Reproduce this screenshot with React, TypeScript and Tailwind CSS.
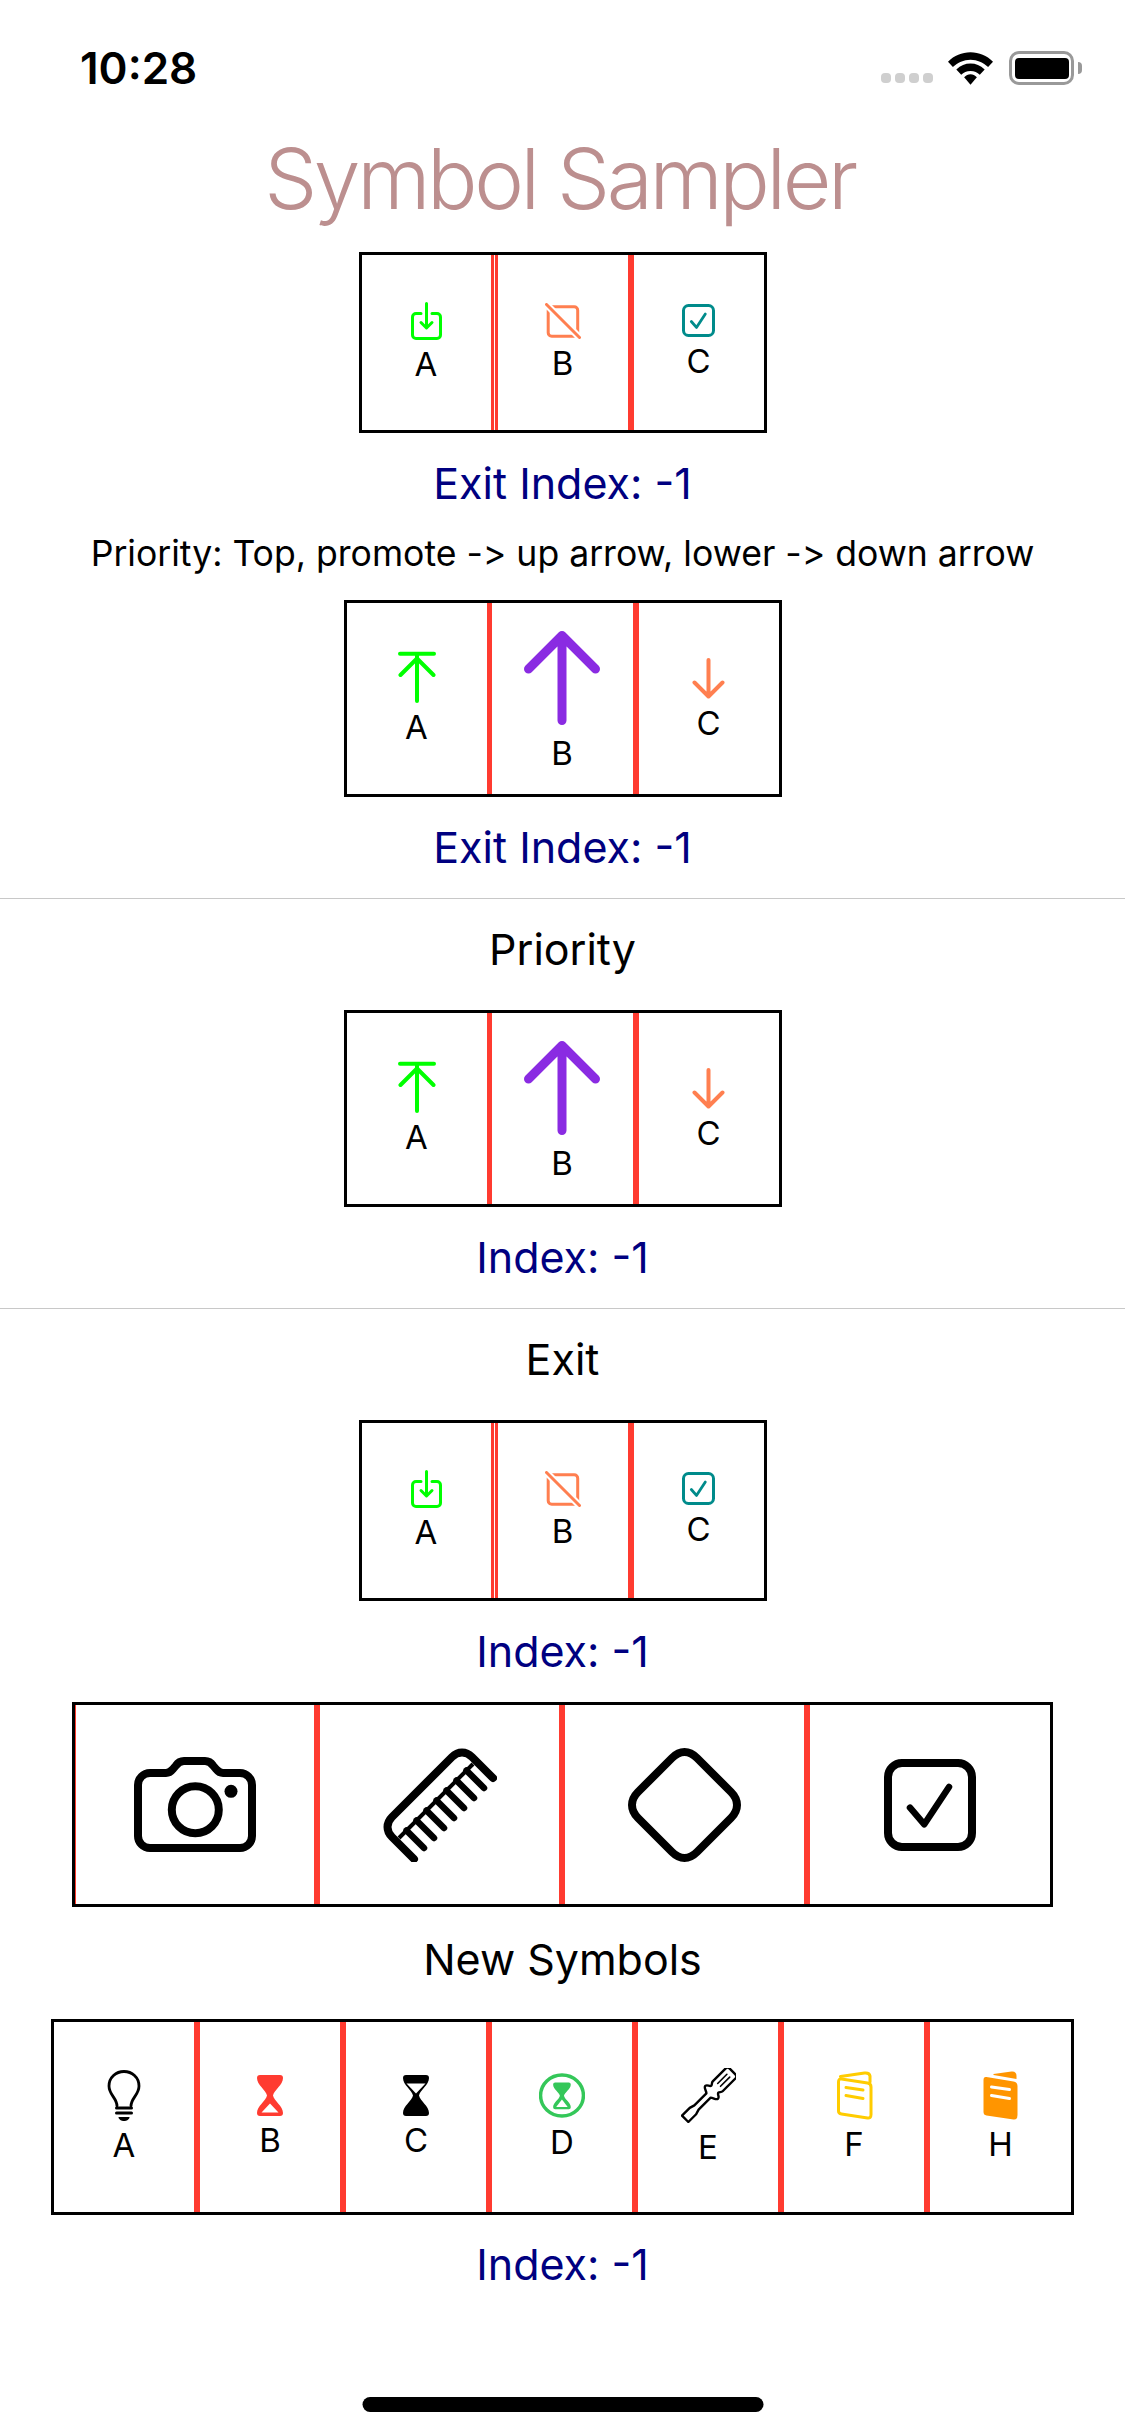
import type { ReactNode } from "react"

function ExitDown() {
  return (
    <svg width="31" height="38" viewBox="0 0 31 38" fill="none" stroke="#00ff00" strokeWidth="3" strokeLinecap="round" strokeLinejoin="round">
      <path d="M10 11.500H5a3.500 3.500 0 0 0-3.500 3.500v18A3.500 3.500 0 0 0 5 36.500h21a3.500 3.500 0 0 0 3.500-3.500V15a3.500 3.500 0 0 0-3.500-3.500h-5" />
      <path d="M15.500 1.500v24M10 20.500l5.500 5.500 5.500-5.500" />
    </svg>
  )
}

function SlashSquare() {
  return (
    <svg width="36" height="36" viewBox="0 0 36 36" fill="none" strokeLinecap="round">
      <rect x="3.200" y="3.800" width="29.500" height="29.500" rx="3.500" stroke="#ff7f50" strokeWidth="3" />
      <path d="M1 1l34 34" stroke="#fff" strokeWidth="7" />
      <path d="M1.500 1.500l33 33" stroke="#ff7f50" strokeWidth="3" />
    </svg>
  )
}

function CheckSquare({ size, color, box, tick }: { size: number; color: string; box: number; tick: number }) {
  const s = (box / 2) * (92 / size)
  return (
    <svg width={size} height={size} viewBox="0 0 92 92" fill="none" stroke={color} strokeLinecap="round" strokeLinejoin="round">
      <rect x={s} y={s} width={92 - 2 * s} height={92 - 2 * s} rx="14" strokeWidth={box * (92 / size)} />
      <path d="M26 48.700L40.300 65.300L65 28" strokeWidth={tick * (92 / size)} />
    </svg>
  )
}

function ArrowTop() {
  return (
    <svg width="38" height="52" viewBox="0 0 38 52" fill="none" stroke="#00ff00" strokeWidth="4" strokeLinecap="round" strokeLinejoin="round">
      <path d="M2 2.700H36M19 4v46M2.500 24L19 7.500L35.500 24" />
    </svg>
  )
}

function ArrowUpBig() {
  return (
    <svg width="76" height="94" viewBox="0 0 76 94" fill="none" stroke="#8a2be2" strokeWidth="9" strokeLinecap="round" strokeLinejoin="round">
      <path d="M38 5v84.500M4.500 38L38 4.500L71.500 38" />
    </svg>
  )
}

function ArrowDownSmall() {
  return (
    <svg width="33" height="41" viewBox="0 0 33 41" fill="none" stroke="#ff7f50" strokeWidth="4" strokeLinecap="round" strokeLinejoin="round">
      <path d="M16.500 2v36M2.500 24.500L16.500 38.500L30.500 24.500" />
    </svg>
  )
}

function Camera() {
  return (
    <svg width="122" height="95" viewBox="0 0 122 95" fill="none" stroke="#000" strokeWidth="8" strokeLinejoin="round">
      <path d="M4 28a12 12 0 0 1 12-12H32c4 0 5-1.500 7-4l3-3.500c2-3 4-4.500 8-4.500H71c4 0 6 1.500 8 4.500l3 3.500c2 2.500 3 4 7 4H106a12 12 0 0 1 12 12V79a12 12 0 0 1-12 12H16a12 12 0 0 1-12-12Z" />
      <circle cx="61.300" cy="52.700" r="23.500" />
      <circle cx="97" cy="34.300" r="6.500" fill="#000" stroke="none" />
    </svg>
  )
}

function Comb() {
  const tips = [
    [101, 41], [91, 51], [81, 61], [71, 71], [61, 81], [51, 91], [41, 101],
  ]
  return (
    <svg width="114" height="115" viewBox="0 0 114 115" fill="none" stroke="#000" strokeLinecap="round" strokeLinejoin="round">
      <path d="M110 31L89 10C83 4 75 4 69 10L9 70C3 76 3 84 9 90L31 112" strokeWidth="8" />
      <path d="M90 17L16 91" strokeWidth="4" strokeLinecap="butt" />
      {tips.map(([x, y]) => (
        <path key={x} d={`M${x} ${y}L${x - 17.5} ${y - 17.5}`} strokeWidth="6.500" />
      ))}
    </svg>
  )
}

function Diamond() {
  return (
    <svg width="113" height="114" viewBox="0 0 113 114" fill="none" stroke="#000" strokeWidth="8" strokeLinejoin="round">
      <path d="M44 10C48 6 52 4 56.500 4C61 4 65 6 69 10L103 44C107 48 109 52.500 109 57C109 61.500 107 66 103 70L69 104C65 108 61 110 56.500 110C52 110 48 108 44 104L10 70C6 66 4 61.500 4 57C4 52.500 6 48 10 44Z" />
    </svg>
  )
}

function Bulb() {
  return (
    <svg width="34" height="51" viewBox="0 0 33 51" fill="none" stroke="#000" strokeLinecap="round">
      <path d="M9.500 36C9.500 28 1.500 25 1.500 16C1.500 7.500 8.500 1.500 16.500 1.500C24.500 1.500 31.500 7.500 31.500 16C31.500 25 23.500 28 23.500 36" strokeWidth="2.800" />
      <path d="M9 38H24M9 43H24" strokeWidth="3" />
      <path d="M11 47H22C22 49.500 19 51 16.500 51C14 51 11 49.500 11 47Z" fill="#000" stroke="none" />
    </svg>
  )
}

const hourglass =
  "M3 0H23Q26 0 26 3C26 10 17 15 16 20.500C17 26 26 31 26 38Q26 41 23 41H3Q0 41 0 38C0 31 9 26 10 20.500C9 15 0 10 0 3Q0 0 3 0Z"

function HourglassBottom({ color }: { color: string }) {
  return (
    <svg width="26" height="41" viewBox="0 0 26 41">
      <path d={hourglass} fill={color} />
      <path d="M13 28.500L21.500 37.500H4.500Z" fill="#fff" />
    </svg>
  )
}

function HourglassTop() {
  return (
    <svg width="26" height="41" viewBox="0 0 26 41">
      <path d={hourglass} fill="#000" />
      <path d="M3.500 8.500H22.500L13 18.500Z" fill="#fff" />
    </svg>
  )
}

function HourglassCircle() {
  return (
    <svg width="46" height="45" viewBox="0 0 44 45" preserveAspectRatio="none">
      <circle cx="22" cy="22.500" r="20.500" fill="none" stroke="#34c759" strokeWidth="3.300" />
      <g transform="translate(13.500 9.500) scale(0.65)">
        <path d={hourglass} fill="#34c759" />
        <path d="M13 26L21.500 37.500H4.500Z" fill="#fff" />
      </g>
    </svg>
  )
}

function Screwdriver() {
  return (
    <svg width="55" height="55" viewBox="0 0 53 55" fill="#fff" stroke="#000" strokeWidth="2.400" strokeLinejoin="round" strokeLinecap="round">
      <g transform="translate(26.500 27.500) rotate(45)">
        <path d="M-4-34H4Q7-34 7-31V-13C7-11 5-10.500 5-9C5-7 9-7 9-4.500C9-2 5-2 3 0V17L4.500 22V33H-4.500V22L-3 17V0C-5-2-9-2-9-4.500C-9-7-5-7-5-9C-5-10.500-7-11-7-13V-31Q-7-34-4-34Z" />
        <path d="M-2-28V-15M2-28V-15" strokeWidth="1.600" />
      </g>
    </svg>
  )
}

function NotebookOutline() {
  return (
    <svg width="37" height="49" viewBox="0 0 36 49" fill="none" stroke="#ffcc00" strokeWidth="3" strokeLinecap="round" strokeLinejoin="round">
      <path d="M4 5.500L28 2Q33 1.500 33.500 5V11" />
      <path d="M5 8L31 12Q34.500 12.500 34.500 16V43.500Q34.500 47.500 31 47L5 43Q2 42.500 2 40V11Q2 7.500 5 8Z" />
      <path d="M9.500 16.500L26.500 19M9.500 24.500L26.500 27.500" />
    </svg>
  )
}

function NotebookFilled() {
  return (
    <svg width="35" height="49" viewBox="0 0 34 49">
      <path d="M10 3L28 .5Q33 0 33 5V8L10 4Z" fill="#ff9500" />
      <path d="M3 6L30 10.500Q34 11 34 15V44Q34 49 30 48.500L3 44.500Q0 44 0 41V9Q0 5.500 3 6Z" fill="#ff9500" />
      <path d="M8 16L26 18.500M8 24.500L26 27.500" stroke="#fff" strokeWidth="3" strokeLinecap="round" />
    </svg>
  )
}

type Item = { icon: ReactNode; label?: string; offset?: string; gap?: string }

function Divided({ children, className }: { children: ReactNode; className: string }) {
  return <div className={`h-full shrink-0 border-[#ff3b30] ${className}`}>{children}</div>
}

function Cell({ item }: { item: Item }) {
  return (
    <div className={`flex h-full flex-col items-center justify-center ${item.offset ?? ""} ${item.gap ?? "gap-1"}`}>
      {item.icon}
      {item.label && <span className="text-[33px] leading-[40px] text-black">{item.label}</span>}
    </div>
  )
}

function ExitBox() {
  return (
    <div className="flex h-[181px] w-[408px] border-[3px] border-black">
      {/* first divider is two hairlines, the segment widths don't quite line up */}
      <div className="flex h-full w-[136px] shrink-0">
        <div className="h-full flex-1">
          <Cell item={{ icon: <ExitDown />, label: "A" }} />
        </div>
        <div className="h-full w-[3px] bg-[#ff3b30]" />
        <div className="h-full w-px" />
        <div className="h-full w-[3px] bg-[#ff3b30]" />
      </div>
      <Divided className="w-[136px] border-r-[6px]">
        <Cell item={{ icon: <SlashSquare />, label: "B" }} />
      </Divided>
      <div className="h-full flex-1">
        <Cell item={{ icon: <CheckSquare size={33} color="#008b8b" box={3} tick={2.800} />, label: "C" }} />
      </div>
    </div>
  )
}

function PriorityBox() {
  return (
    <div className="flex h-[197px] w-[438px] border-[3px] border-black">
      <Divided className="w-[145px] border-r-[5px]">
        <Cell item={{ icon: <ArrowTop />, label: "A" }} />
      </Divided>
      <Divided className="w-[147px] border-r-[6px]">
        <Cell item={{ icon: <ArrowUpBig />, label: "B", offset: "pt-[6px]", gap: "gap-2" }} />
      </Divided>
      <div className="h-full flex-1">
        <Cell item={{ icon: <ArrowDownSmall />, label: "C", offset: "pt-[3px]" }} />
      </div>
    </div>
  )
}

const blueText = "text-[43px] leading-[50px] text-[#000080]"

export default function App() {
  const newSymbols: Item[] = [
    { icon: <Bulb />, label: "A" },
    { icon: <HourglassBottom color="#ff3b30" />, label: "B" },
    { icon: <HourglassTop />, label: "C" },
    { icon: <HourglassCircle />, label: "D" },
    { icon: <Screwdriver />, label: "E" },
    { icon: <NotebookOutline />, label: "F" },
    { icon: <NotebookFilled />, label: "H" },
  ]

  return (
    <div className="relative flex h-[2436px] w-[1125px] flex-col items-center overflow-hidden bg-white font-['Inter','Liberation_Sans',sans-serif]">
      {/* status bar */}
      <div className="flex h-[136px] w-full shrink-0 items-start justify-between pl-[80px] pr-[43px] pt-[44px]">
        <span className="text-[44px] font-semibold leading-[48px] text-black">10:28</span>
        <div className="flex items-center pt-[7px]">
          <div className="mt-[20px] flex gap-[4px]">
            {[0, 1, 2, 3].map((i) => (
              <div key={i} className="h-[10px] w-[10px] rounded-[4px] bg-[#cfcfcf]" />
            ))}
          </div>
          <svg className="ml-[15px]" width="45" height="33" viewBox="0 0 46 33" fill="#000">
            <path d="M23 0C14 0 6.500 3.500 0 9.500L5 15C10 10.500 16 7.500 23 7.500S36 10.500 41 15L46 9.500C39.500 3.500 32 0 23 0Z" />
            <path d="M23 11.500C17.500 11.500 13 13.500 8.500 17.500L13.500 23C16 20.500 19 19 23 19S30 20.500 32.500 23L37.500 17.500C33 13.500 28.500 11.500 23 11.500Z" />
            <path d="M23 22.500C20.500 22.500 18.500 23.500 16.500 25.500L23 33L29.500 25.500C27.500 23.500 25.500 22.500 23 22.500Z" />
          </svg>
          <div className="ml-[16px] flex items-center">
            <div className="flex h-[34px] w-[65px] items-center justify-center rounded-[10px] border-[3px] border-[#999]">
              <div className="h-[21px] w-[54px] rounded-[4px] bg-black" />
            </div>
            <div className="ml-[4px] h-[12px] w-[4px] rounded-r-full bg-[#999]" />
          </div>
        </div>
      </div>

      <h1 className="shrink-0 pr-[6px] text-[84px] font-light leading-[86px] tracking-[-3.4px] text-[#bc8f8f]">Symbol Sampler</h1>

      <div className="mt-[30px]">
        <ExitBox />
      </div>
      <p className={`mt-[25px] ${blueText}`}>Exit Index: -1</p>
      <p className="mt-[24px] text-[35.6px] leading-[44px] text-black [font-feature-settings:'calt'_0]">
        Priority: Top, promote -&gt; up arrow, lower -&gt; down arrow
      </p>
      <div className="mt-[24px]">
        <PriorityBox />
      </div>
      <p className={`mt-[25px] ${blueText}`}>Exit Index: -1</p>

      <div className="mt-[26px] h-px w-full bg-[#c8c8c8]" />
      <p className="mt-[25px] text-[43px] leading-[50px] text-black">Priority</p>
      <div className="mt-[36px]">
        <PriorityBox />
      </div>
      <p className={`mt-[25px] ${blueText}`}>Index: -1</p>

      <div className="mt-[26px] h-px w-full bg-[#c8c8c8]" />
      <p className="mt-[25px] text-[43px] leading-[50px] text-black">Exit</p>
      <div className="mt-[36px]">
        <ExitBox />
      </div>
      <p className={`mt-[25px] ${blueText}`}>Index: -1</p>

      <div className="mt-[26px] flex h-[205px] w-[981px] border-[3px] border-black">
        <div className="h-full w-px shrink-0 bg-[#ff3b30]" />
        <Divided className="w-[244px] border-r-[6px]">
          <Cell item={{ icon: <Camera /> }} />
        </Divided>
        <Divided className="w-[245px] border-r-[6px]">
          <Cell item={{ icon: <Comb /> }} />
        </Divided>
        <Divided className="w-[245px] border-r-[6px]">
          <Cell item={{ icon: <Diamond /> }} />
        </Divided>
        <div className="h-full flex-1">
          <Cell item={{ icon: <CheckSquare size={92} color="#000" box={8} tick={6.500} /> }} />
        </div>
      </div>

      <p className="mt-[27px] text-[43px] leading-[50px] text-black">New Symbols</p>

      <div className="mt-[35px] flex h-[196px] w-[1023px] border-[3px] border-black">
        {newSymbols.map((item, i) =>
          i < newSymbols.length - 1 ? (
            <Divided key={i} className="w-[146px] border-r-[6px]">
              <Cell item={item} />
            </Divided>
          ) : (
            <div key={i} className="h-full flex-1">
              <Cell item={item} />
            </div>
          ),
        )}
      </div>

      <p className={`mt-[24px] ${blueText}`}>Index: -1</p>

      {/* home indicator */}
      <div className="absolute bottom-[24px] left-1/2 h-[15px] w-[401px] -translate-x-1/2 rounded-full bg-black" />
    </div>
  )
}
